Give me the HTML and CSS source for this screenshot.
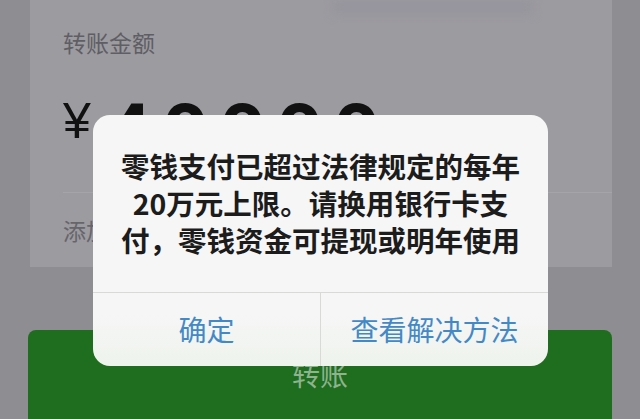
FILE: index.html
```html
<!DOCTYPE html>
<html lang="zh-CN">
<head>
    <meta charset="UTF-8">
    <meta name="viewport" content="width=device-width, initial-scale=1.0">
    <title>转账</title>
    <link rel="stylesheet" href="styles.css">
</head>
<body>
<div class="screen">
    <div class="transferCard">
        <div class="payeeHeader"></div>
        <div class="fieldLabel">转账金额</div>
        <div class="amountRow">
            <span class="currency">¥</span>
            <span class="amount">40000</span>
        </div>
        <div class="noteRow">添加转账说明</div>
    </div>
    <div class="submitButton">转账</div>
</div>

<!-- alert shown over the transfer form -->
<div class="alertBox">
    <div class="alertMessage">
        零钱支付已超过法律规定的每年<br>
        20万元上限。请换用银行卡支<br>
        付，零钱资金可提现或明年使用
    </div>
    <div class="alertActions">
        <div class="alertAction">确定</div>
        <div class="alertAction">查看解决方法</div>
    </div>
</div>
</body>
</html>
```

FILE: styles.css
```css
html, body {
    margin: 0;
    padding: 0;
}

body {
    position: relative;
    width: 640px;
    height: 419px;
    overflow: hidden;
    background: #8e8d92;
    font-family: "Noto Sans CJK SC", "Noto Sans", sans-serif;
}

.screen {
    padding: 0 28px 0 28px;
}

/* Transfer form card */
.transferCard {
    margin-left: 2px;
    padding: 0 0 22px 33px;
    background: #9c9ba0;
}

.transferCard .payeeHeader {
    width: 200px;
    height: 14px;
    margin-left: 270px;
    background: #96959d;
    filter: blur(5px);
}

.transferCard .fieldLabel {
    margin-top: 13px;
    font-size: 23px;
    line-height: 30px;
    color: #5f5e64;
}

.transferCard .amountRow {
    display: flex;
    align-items: flex-start;
    margin-top: 35px;
    height: 65px;
    overflow: hidden;
    color: #111;
}

.amountRow .currency {
    margin-top: 4px;
    font-family: "Liberation Sans", sans-serif;
    font-size: 50px;
    line-height: 50px;
}

.amountRow .amount {
    margin-left: 14px;
    font-family: Roboto, "Liberation Sans", sans-serif;
    font-weight: 700;
    font-size: 82px;
    line-height: 84px;
    letter-spacing: 10px;
}

.transferCard .noteRow {
    margin-top: 35px;
    padding-top: 22px;
    border-top: 1px solid #a5a4a9;
    font-size: 23px;
    line-height: 30px;
    color: #66656b;
}

/* Green submit button */
.submitButton {
    height: 89px;
    margin-top: 63px;
    padding-top: 24px;
    box-sizing: border-box;
    border-radius: 8px 8px 0 0;
    background: #1f6d1f;
    text-align: center;
    font-size: 28px;
    line-height: 40px;
    color: #8fb28f;
}

/* Alert */
.alertBox {
    position: absolute;
    left: 93px;
    top: 115px;
    width: 455px;
    border-radius: 17px;
    overflow: hidden;
    background: linear-gradient(#f6f6f6 0, #f6f6f6 200px, #eef3ec 100%);
}

.alertBox .alertMessage {
    padding: 32px 0 34px;
    text-align: center;
    font-size: 28.5px;
    font-weight: 700;
    line-height: 37px;
    color: #1c1c1c;
}

.alertBox .alertActions {
    display: flex;
    height: 73px;
    border-top: 1px solid #d9dad8;
}

.alertActions .alertAction {
    flex: 1;
    display: flex;
    align-items: center;
    justify-content: center;
    font-size: 28px;
    line-height: 37px;
    color: #4389c6;
}

.alertActions .alertAction + .alertAction {
    border-left: 1px solid #d9dad8;
}
```
